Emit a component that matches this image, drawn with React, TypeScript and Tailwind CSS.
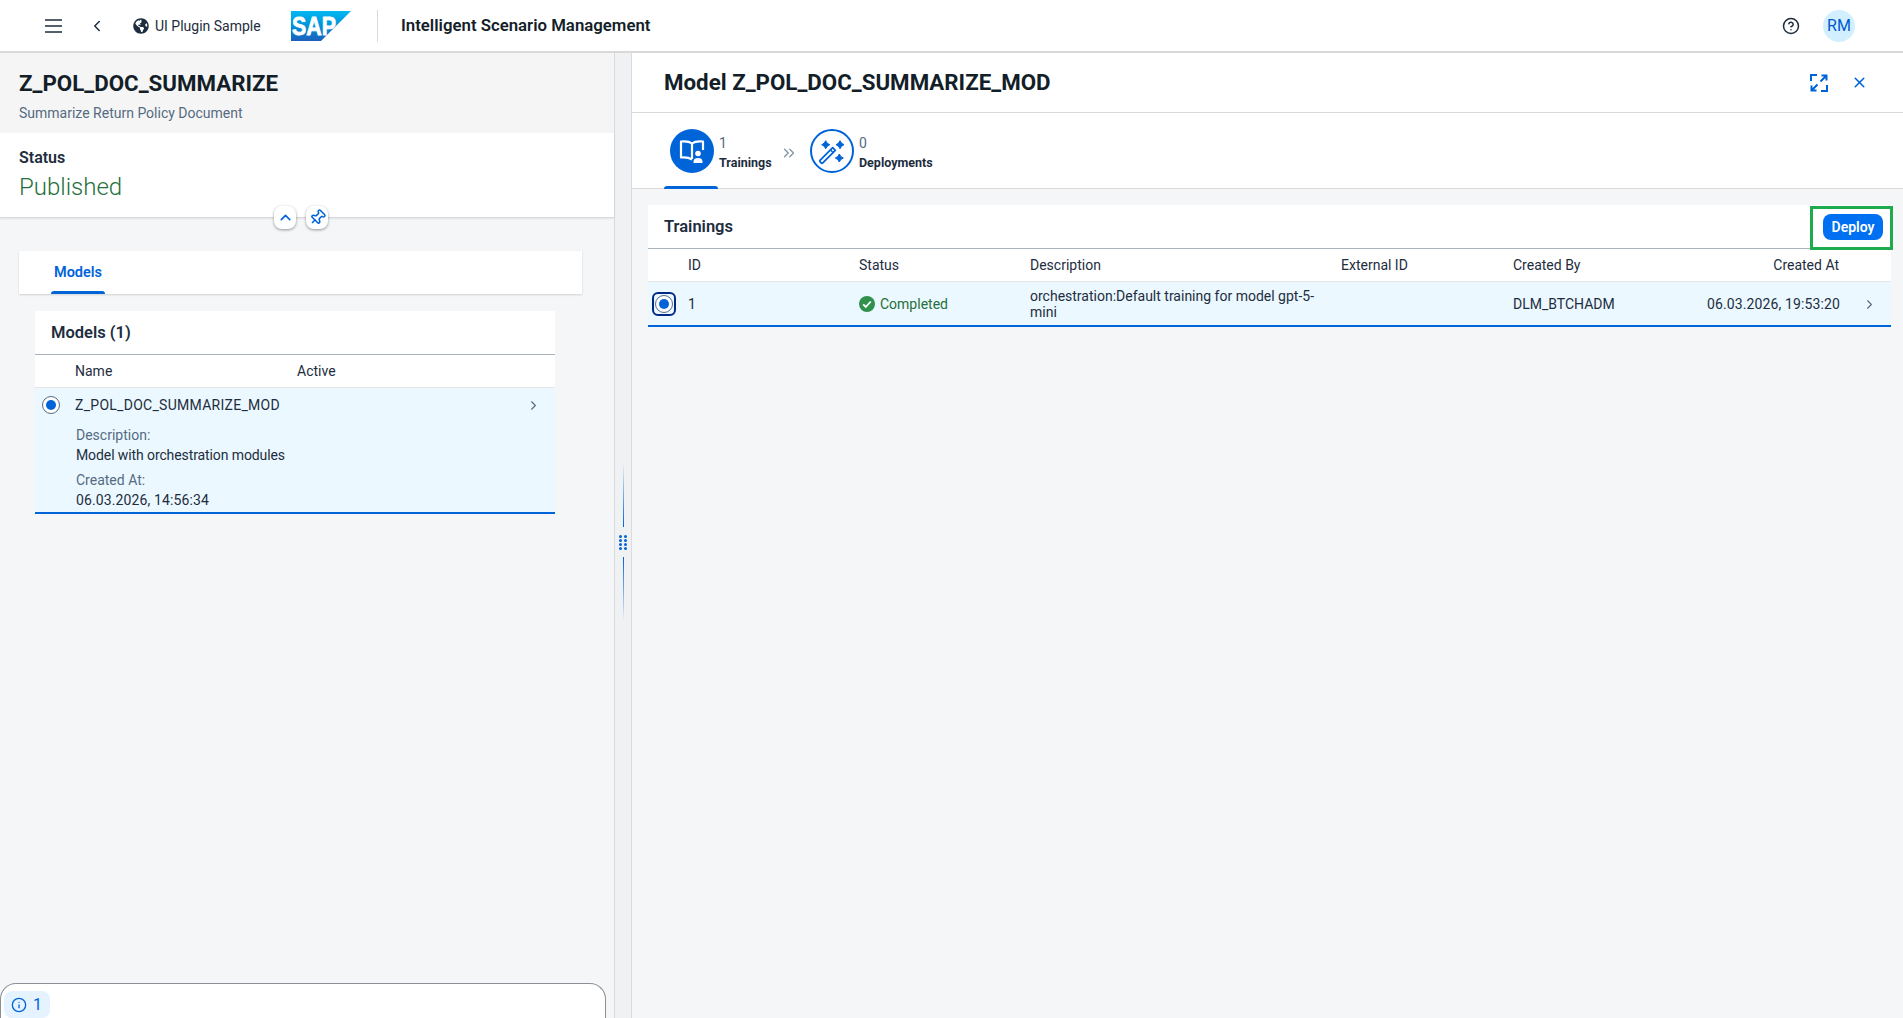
import { ChevronLeft, ChevronRight, ChevronUp, ChevronsRight, CircleHelp, Info, Pin, X } from "lucide-react";
import { FaGlobeAmericas } from "react-icons/fa";

const font = "font-['Roboto',sans-serif]";

function Radio() {
  return (
    <span className="flex h-[18px] w-[18px] items-center justify-center rounded-full border border-[#556b82] bg-white">
      <span className="h-[10px] w-[10px] rounded-full bg-[#0064d9]" />
    </span>
  );
}

function BookUser() {
  return (
    <svg viewBox="0 0 26 26" className="h-[26px] w-[26px]" fill="none" stroke="white" strokeWidth="2.200">
      <path d="M13 5.500C10.500 3.500 6 3 2 3.500v16c4-.5 8 0 11 2" strokeLinejoin="round" />
      <path d="M13 5.500c2.500-2 7-2.500 11-2V12" strokeLinejoin="round" />
      <path d="M13 5.500V21" />
      <circle cx="19" cy="15.500" r="2.800" fill="white" stroke="none" />
      <path d="M14.500 25v-1.500c0-2.500 2-3.500 4.500-3.500s4.500 1 4.500 3.500V25z" fill="white" stroke="none" />
    </svg>
  );
}

function Wand() {
  return (
    <svg viewBox="0 0 32 32" className="h-8 w-8" fill="#0064d9" stroke="#0064d9" strokeWidth="1" strokeLinejoin="round">
      <path d="M9.700 5.700q1 3 4 4q-3 1-4 4q-1-3-4-4q3-1 4-4z" />
      <path d="M24 5.700q1 3 4 4q-3 1-4 4q-1-3-4-4q3-1 4-4z" />
      <path d="M23.300 19q1 3 4 4q-3 1-4 4q-1-3-4-4q3-1 4-4z" />
      <path d="M4.200 25.200L16.700 12.700l2.600 2.600L6.800 27.800c-.5.5-1.200.5-1.700 0l-.9-.9c-.5-.5-.5-1.200 0-1.700z" fill="none" strokeWidth="1.800" />
      <path d="M14.500 14.900l2.600 2.600" fill="none" strokeWidth="1.400" />
    </svg>
  );
}

function Expand() {
  return (
    <svg viewBox="0 0 18 18" className="h-[18px] w-[18px]" fill="none" stroke="#0064d9" strokeWidth="2">
      <path d="M7 1H1v6M17 11v6h-6" />
      <path d="M10.500 7.500L15.500 2.500M11.500 1.500H16.500V6.500" />
      <path d="M7.500 10.500L2.500 15.500M1.500 11.500V16.500H6.500" />
    </svg>
  );
}

function Check() {
  return (
    <svg viewBox="0 0 16 16" className="h-4 w-4 shrink-0">
      <circle cx="8" cy="8" r="8" fill="#30914c" />
      <path d="M4.200 8.300l2.600 2.600 5-5.400" fill="none" stroke="white" strokeWidth="1.800" />
    </svg>
  );
}

function SapLogo() {
  return (
    <svg viewBox="0 0 60 30" className="h-[30px] w-[60px]">
      <defs>
        <linearGradient id="sapGrad" x1="0" y1="0" x2="0" y2="1">
          <stop offset="0" stopColor="#00b8f1" />
          <stop offset="0.5" stopColor="#0091da" />
          <stop offset="1" stopColor="#1e5fbb" />
        </linearGradient>
      </defs>
      <polygon points="0,0 60,0 30,30 0,30" fill="url(#sapGrad)" />
      <text x="1" y="24" fontFamily="Liberation Sans" fontWeight="700" fontSize="25" fill="white" textLength="44" lengthAdjust="spacingAndGlyphs" stroke="white" strokeWidth="0.8">
        SAP
      </text>
    </svg>
  );
}

export default function App() {
  return (
    <div className={`flex h-screen flex-col overflow-hidden bg-[#f5f6f7] text-sm text-[#1d2d3e] ${font}`}>
      {/* shell bar */}
      <header className="flex h-[53px] shrink-0 items-center border-b-2 border-[#d9d9d9] bg-white">
        <svg viewBox="0 0 17 14" className="ml-[45px] h-[14px] w-[17px]" fill="none" stroke="#1d2d3e" strokeWidth="1.500">
          <path d="M0 1h17M0 7h17M0 13h17" />
        </svg>
        <ChevronLeft size={18} strokeWidth={2} className="ml-[26px]" />
        <FaGlobeAmericas size={16} className="ml-[27px]" />
        <span className="ml-[6px] w-[133px]">UI Plugin Sample</span>
        <div className="ml-[3px]">
          <SapLogo />
        </div>
        <div className="ml-[26px] h-8 w-px bg-[#d9d9d9]" />
        <span className="ml-[23px] pt-[1px] text-[16.800px] font-semibold text-[#131e29]">Intelligent Scenario Management</span>
        <CircleHelp size={18} strokeWidth={2} className="ml-auto" />
        <div className="ml-[23px] mr-[48px] flex h-8 w-8 items-center justify-center rounded-full bg-[#d1efff] text-base text-[#0057d2]">
          RM
        </div>
      </header>

      <div className="flex min-h-0 flex-1">
        {/* left column */}
        <div className="flex w-[614px] shrink-0 flex-col">
          <div className="relative z-10 shrink-0">
            <div className="flex h-[80px] flex-col bg-[#f5f5f5] px-[19px] pt-[15px]">
              <h1 className="text-[22.300px] font-bold leading-[30px] text-[#131e29]">Z_POL_DOC_SUMMARIZE</h1>
              <p className="mt-[5px] text-sm leading-5 text-[#556b82]">Summarize Return Policy Document</p>
            </div>
            <div className="h-[85px] border-b border-[#d9d9d9] bg-white px-[19px] pt-[15px] shadow-[0_1px_2px_rgba(0,0,0,0.08)]">
              <div className="text-base font-semibold leading-5">Status</div>
              <div className="mt-[3px] text-2xl font-light leading-8 text-[#256f3a]">Published</div>
            </div>
            <button className="absolute left-[274px] top-[153px] flex h-[23px] w-[22px] items-center justify-center rounded-lg bg-white shadow-[0_1px_3px_rgba(0,0,0,0.4)]">
              <ChevronUp size={17} strokeWidth={2.200} className="text-[#0064d9]" />
            </button>
            <button className="absolute left-[306px] top-[153px] flex h-[23px] w-[22px] items-center justify-center rounded-lg bg-white shadow-[0_1px_3px_rgba(0,0,0,0.4)]">
              <Pin size={17} strokeWidth={2.200} className="rotate-45 text-[#0064d9]" />
            </button>
          </div>

          <div className="min-h-0 flex-1 px-[19px] pt-[33px]">
            <div className="flex h-[43px] w-[563px] bg-white pl-8 shadow-[0_1px_2px_rgba(0,0,0,0.15)]">
              <div className="relative flex h-full w-[54px] items-center justify-center pt-[2px] text-[14.500px] font-semibold text-[#0064d9]">
                Models
                <span className="absolute bottom-0 left-0 right-0 h-[3px] rounded-t bg-[#0064d9]" />
              </div>
            </div>

            <div className="ml-4 mt-[17px] w-[520px] bg-white">
              <div className="flex h-[44px] items-center border-b border-[#a9b4be] pl-4 text-[16.500px] font-semibold">Models (1)</div>
              <div className="flex h-[33px] items-center border-b border-[#e5e5e5] pl-10">
                <span className="w-[222px]">Name</span>
                <span>Active</span>
              </div>
              <div className="h-[126px] border-b-2 border-[#0064d9] bg-[#ebf8ff]">
                <div className="flex h-[34px] items-center pl-[7px] pr-[14px]">
                  <Radio />
                  <span className="ml-[15px] tracking-[0.28px]">Z_POL_DOC_SUMMARIZE_MOD</span>
                  <ChevronRight size={15} strokeWidth={1.800} className="ml-auto text-[#556b82]" />
                </div>
                <div className="pl-[41px] pt-[3px] leading-5">
                  <div className="text-[#556b82]">Description:</div>
                  <div className="tracking-[-0.1px]">Model with orchestration modules</div>
                  <div className="mt-[5px] text-[#556b82]">Created At:</div>
                  <div className="tracking-[0.12px]">06.03.2026, 14:56:34</div>
                </div>
              </div>
            </div>
          </div>

          <div className="mr-2 flex h-[35px] shrink-0 items-start rounded-t-2xl border border-b-0 border-[#8a8f95] bg-white pl-[3px] pt-[7px]">
            <div className="flex h-[27px] w-[46px] items-center gap-[6px] rounded-lg bg-[#e5f2ff] pl-[7px] text-base text-[#0064d9]">
              <Info size={16} strokeWidth={2} />
              <span>1</span>
            </div>
          </div>
        </div>

        {/* splitter */}
        <div className="flex w-[18px] shrink-0 flex-col items-center border-x border-[#d9dbde] bg-[#eff1f3] pt-[410px]">
          <div className="h-16 w-px bg-gradient-to-b from-transparent to-[#0064d9]" />
          <div className="mt-2 grid grid-cols-2 gap-x-[2px] gap-y-[1px]">
            {[0, 1, 2, 3, 4, 5, 6, 7].map((i) => (
              <span key={i} className="h-[3px] w-[3px] rounded-full bg-[#0064d9]" />
            ))}
          </div>
          <div className="mt-[7px] h-16 w-px bg-gradient-to-t from-transparent to-[#0064d9]" />
        </div>

        {/* right column */}
        <div className="flex min-w-0 flex-1 flex-col">
          <div className="flex h-[60px] shrink-0 items-center border-b border-[#d9d9d9] bg-white pl-8 pr-[35px]">
            <h2 className="pt-[1px] text-[22.300px] font-bold text-[#131e29]">Model Z_POL_DOC_SUMMARIZE_MOD</h2>
            <div className="ml-auto flex items-center gap-[23px]">
              <Expand />
              <X size={17} strokeWidth={2.200} className="text-[#0064d9]" />
            </div>
          </div>

          <div className="flex h-[76px] shrink-0 border-b border-[#d9d9d9] bg-white pl-8">
            <div className="relative flex h-full w-[124px] items-start pl-[6px] pt-[16px]">
              <span className="flex h-11 w-11 shrink-0 items-center justify-center rounded-full bg-[#0064d9]">
                <BookUser />
              </span>
              <div className="ml-[5px] pt-[4px]">
                <div className="text-sm leading-5 text-[#556b82]">1</div>
                <div className="text-[12.500px] font-bold leading-5">Trainings</div>
              </div>
              <span className="absolute bottom-[-1px] left-0 h-[3px] w-[54px] rounded-t bg-[#0064d9]" />
            </div>
            <ChevronsRight size={18} strokeWidth={1.800} className="ml-[-8px] mt-[31px] text-[#8396a8]" />
            <div className="ml-[12px] flex items-start pt-[16px]">
              <span className="flex h-11 w-11 shrink-0 items-center justify-center rounded-full border-2 border-[#0064d9] bg-white">
                <Wand />
              </span>
              <div className="ml-[5px] pt-[4px]">
                <div className="text-sm leading-5 text-[#556b82]">0</div>
                <div className="text-[12.500px] font-bold leading-5">Deployments</div>
              </div>
            </div>
          </div>

          <div className="px-[16px] pt-[16px] pr-[12px]">
            <div className="relative bg-white">
              <div className="flex h-[44px] items-center justify-between border-b border-[#a9b4be] pl-4 pr-2">
                <span className="text-[16.500px] font-semibold">Trainings</span>
                <button className="h-[26px] w-[60px] rounded-lg bg-[#0070f2] text-sm font-semibold text-white">Deploy</button>
              </div>
              <div className="absolute right-[-2px] top-[1px] h-[44px] w-[83px] border-[3px] border-[#1eab4d]" />

              <div className="grid grid-cols-[211px_171px_311px_172px_1fr] items-center">
                <div className="col-span-5 grid h-[33px] grid-cols-subgrid items-center border-b border-[#e5e5e5]">
                  <span className="pl-10">ID</span>
                  <span>Status</span>
                  <span>Description</span>
                  <span>External ID</span>
                  <div className="flex justify-between pr-[52px]">
                    <span>Created By</span>
                    <span>Created At</span>
                  </div>
                </div>
                <div className="col-span-5 grid h-[45px] grid-cols-subgrid items-center border-b-2 border-[#0064d9] bg-[#ebf8ff] pt-[1px]">
                  <div className="flex items-center pl-[4px]">
                    <span className="flex h-6 w-6 items-center justify-center rounded-md border-2 border-[#002a86]">
                      <Radio />
                    </span>
                    <span className="ml-[12px]">1</span>
                  </div>
                  <div className="flex items-center gap-[5px] text-[#256f3a]">
                    <Check />
                    <span>Completed</span>
                  </div>
                  <span className="w-[290px] leading-[16px]">orchestration:Default training for model gpt-5-mini</span>
                  <span />
                  <div className="flex items-center pr-[14px]">
                    <span>DLM_BTCHADM</span>
                    <span className="ml-auto tracking-[0.12px]">06.03.2026, 19:53:20</span>
                    <ChevronRight size={15} strokeWidth={1.800} className="ml-[22px] text-[#556b82]" />
                  </div>
                </div>
              </div>
            </div>
          </div>
        </div>
      </div>
    </div>
  );
}
